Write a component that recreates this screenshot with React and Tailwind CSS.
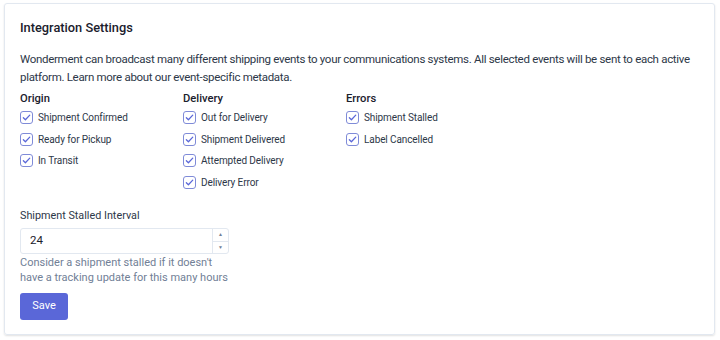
import React, { useState } from 'react';

const groups = [
    { title: 'Origin', items: ['Shipment Confirmed', 'Ready for Pickup', 'In Transit'] },
    { title: 'Delivery', items: ['Out for Delivery', 'Shipment Delivered', 'Attempted Delivery', 'Delivery Error'] },
    { title: 'Errors', items: ['Shipment Stalled', 'Label Cancelled'] },
];

const Check = ({ label }) => (
    <label className="flex items-center h-[21.5px] text-[10px] tracking-[-0.1px] text-[#2d3748]">
        <span className="w-[13px] h-[13px] mr-[5px] rounded-[3px] border border-[#7f8bd8] bg-white flex items-center justify-center">
            <svg width="9" height="9" viewBox="0 0 10 10" fill="none">
                <path d="M1.5 5.2l2.3 2.3L8.6 2.4" stroke="#5a67d8" strokeWidth="1.4" strokeLinecap="round" strokeLinejoin="round" />
            </svg>
        </span>
        {label}
    </label>
);

const App = () => {
    const [hours, setHours] = useState(24);

    return (
        <div className="w-[720px] h-[340px] bg-white pt-[3px] pl-[4px]" style={{ fontFamily: 'Roboto, "Liberation Sans", sans-serif' }}>
            <div className="w-[711px] h-[332px] border border-[#e2e8f0] rounded-[3px] shadow-[0_1px_2px_rgba(0,0,0,0.12)] pl-[15px] pr-[15px] pt-[15px]">
                <h2 className="text-[12.8px] font-medium text-[#1a202c] leading-[18px]">Integration Settings</h2>

                <p className="mt-[13px] text-[11.5px] tracking-[-0.3px] leading-[18px] text-[#2d3748]">
                    Wonderment can broadcast many different shipping events to your communications systems. All selected events will be sent to each active platform. Learn more about our event-specific metadata.
                </p>

                {/* event groups */}
                <div className="flex mt-[5px]">
                    {groups.map((g) => (
                        <div key={g.title} className="w-[163px]">
                            <h3 className="text-[11.2px] font-medium text-[#1a202c] leading-[16px]">{g.title}</h3>
                            {g.items.map((item) => <Check key={item} label={item} />)}
                        </div>
                    ))}
                </div>

                {/* Stalled interval */}
                <div className="mt-[15px]">
                    <label className="block text-[10.8px] text-[#2d3748] leading-[16px]">Shipment Stalled Interval</label>
                    <div className="mt-[4px] flex w-[209px] h-[26px] border border-[#e2e8f0] rounded-[3px]">
                        <input
                            value={hours}
                            onChange={(e) => setHours(e.target.value)}
                            className="flex-1 min-w-0 px-[9px] text-[11.5px] text-[#1a202c] outline-none bg-transparent"
                        />
                        <div className="w-[16px] border-l border-[#e2e8f0] flex flex-col">
                            <div className="flex-1 flex items-center justify-center border-b border-[#e2e8f0] text-[5px] text-[#718096]">▲</div>
                            <div className="flex-1 flex items-center justify-center text-[5px] text-[#718096]">▼</div>
                        </div>
                    </div>
                    <p className="mt-[1px] w-[210px] text-[11px] leading-[15px] text-[#718096]">
                        Consider a shipment stalled if it doesn't have a tracking update for this many hours
                    </p>
                </div>

                <button className="mt-[8px] w-[48px] h-[27px] rounded-[3px] bg-[#5a67d8] text-white text-[11px]">Save</button>
            </div>
        </div>
    );
};

export default App;
